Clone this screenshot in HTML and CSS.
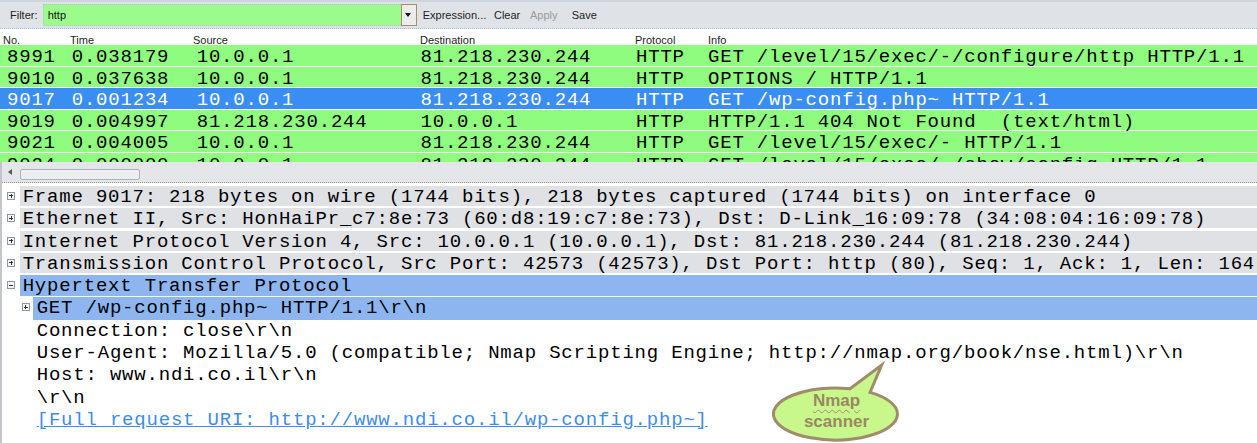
FILE: index.html
```html
<!DOCTYPE html>
<html>
<head>
<meta charset="utf-8">
<link rel="stylesheet" href="styles.css">
</head>
<body>
<div class="app">
  <div class="toolbar">
    <span class="flabel">Filter:</span>
    <div class="filter"><span class="val">http</span><span class="dd"></span></div>
    <span class="tb w-expr">Expression...</span>
    <span class="tb w-clear">Clear</span>
    <span class="tb w-apply dis">Apply</span>
    <span class="tb">Save</span>
  </div>

  <div class="phead">
    <span>No.</span><span>Time</span><span>Source</span><span>Destination</span><span>Protocol</span><span>Info</span>
  </div>
  <div class="prows">
    <div class="prow"><span>8991</span><span>0.038179</span><span>10.0.0.1</span><span>81.218.230.244</span><span>HTTP</span><span>GET /level/15/exec/-/configure/http HTTP/1.1</span></div>
    <div class="prow"><span>9010</span><span>0.037638</span><span>10.0.0.1</span><span>81.218.230.244</span><span>HTTP</span><span>OPTIONS / HTTP/1.1</span></div>
    <div class="prow sel"><span>9017</span><span>0.001234</span><span>10.0.0.1</span><span>81.218.230.244</span><span>HTTP</span><span>GET /wp-config.php~ HTTP/1.1</span></div>
    <div class="prow"><span>9019</span><span>0.004997</span><span>81.218.230.244</span><span>10.0.0.1</span><span>HTTP</span><span>HTTP/1.1 404 Not Found  (text/html)</span></div>
    <div class="prow"><span>9021</span><span>0.004005</span><span>10.0.0.1</span><span>81.218.230.244</span><span>HTTP</span><span>GET /level/15/exec/- HTTP/1.1</span></div>
    <div class="prow"><span>9024</span><span>0.000000</span><span>10.0.0.1</span><span>81.218.230.244</span><span>HTTP</span><span>GET /level/15/exec/-/show/config HTTP/1.1</span></div>
  </div>
  <div class="hscroll"><span class="arr"></span><span class="thumb"></span></div>

  <div class="details">
    <div class="drow"><span class="tog plus"></span><div class="lbl g">Frame 9017: 218 bytes on wire (1744 bits), 218 bytes captured (1744 bits) on interface 0</div></div>
    <div class="drow"><span class="tog plus"></span><div class="lbl g">Ethernet II, Src: HonHaiPr_c7:8e:73 (60:d8:19:c7:8e:73), Dst: D-Link_16:09:78 (34:08:04:16:09:78)</div></div>
    <div class="drow"><span class="tog plus"></span><div class="lbl g">Internet Protocol Version 4, Src: 10.0.0.1 (10.0.0.1), Dst: 81.218.230.244 (81.218.230.244)</div></div>
    <div class="drow"><span class="tog plus"></span><div class="lbl g">Transmission Control Protocol, Src Port: 42573 (42573), Dst Port: http (80), Seq: 1, Ack: 1, Len: 164</div></div>
    <div class="drow"><span class="tog minus"></span><div class="lbl hl http">Hypertext Transfer Protocol</div></div>
    <div class="drow sub"><span class="tog plus"></span><div class="lbl hl get">GET /wp-config.php~ HTTP/1.1\r\n</div></div>
    <div class="drow"><div class="lbl txt">Connection: close\r\n</div></div>
    <div class="drow"><div class="lbl txt">User-Agent: Mozilla/5.0 (compatible; Nmap Scripting Engine; http://nmap.org/book/nse.html)\r\n</div></div>
    <div class="drow"><div class="lbl txt">Host: www.ndi.co.il\r\n</div></div>
    <div class="drow"><div class="lbl txt">\r\n</div></div>
    <div class="drow"><div class="lbl txt"><span class="link">[Full request URI: http://www.ndi.co.il/wp-config.php~]</span></div></div>
  </div>

  <div class="bubble">
    <svg width="135" height="83" viewBox="0 0 135 83">
      <path d="M100,32.4 A62 26 0 1 1 80,28.72 L111.7,5 Z" fill="#c8f78b" stroke="#a08b6b" stroke-width="3" stroke-linejoin="miter"/>
    </svg>
    <div class="btxt"><span class="nm">Nmap</span><br>scanner</div>
  </div>
</div>
</body>
</html>
```

FILE: styles.css
```css
* { box-sizing: border-box; }
body {
  margin: 0;
  width: 1257px;
  height: 443px;
  overflow: hidden;
  background: #fff;
  font-family: "Liberation Sans", Arial, sans-serif;
}
.app { position: relative; height: 443px; }

/* toolbar */
.toolbar {
  height: 29px;
  border-top: 2px solid #cfd5dc;
  border-bottom: 1px dotted #9fc0e6;
  background: #dfe2e6;
  display: flex;
  align-items: center;
  font-size: 11px;
  color: #1e1e1e;
}
.flabel { margin-left: 10px; width: 32.7px; }
.filter {
  width: 374px;
  height: 22px;
  display: flex;
  background: #9bfb8b;
  border: 1px dotted #b5c3d2;
}
.filter .val { flex: 1; padding-left: 4px; line-height: 20px; color: #111; }
.dd {
  position: relative;
  width: 16px;
  height: 22px;
  margin: -1px -1px -1px 0;
  border: 1px solid #a38f6c;
  background: #ececec;
}
.dd::before {
  content: "";
  position: absolute;
  left: 3.5px;
  top: 8px;
  border-left: 3.5px solid transparent;
  border-right: 3.5px solid transparent;
  border-top: 4px solid #111;
}
.tb { display: inline-block; }
.w-expr { margin-left: 6px; width: 71.3px; }
.w-clear { width: 36px; }
.w-apply { width: 41.7px; }
.dis { color: #9a9a9a; }

/* packet list */
.phead {
  height: 16px;
  padding: 5px 0 0 3px;
  font-size: 11px;
  line-height: 12px;
  color: #1e1e1e;
  display: grid;
  grid-template-columns: 67px 123px 227px 215px 73px 1fr;
  background: #fff;
}
.prows { height: 116.7px; overflow: hidden; }
.prow {
  display: grid;
  grid-template-columns: 64.7px 125px 223.8px 215.5px 72px 1fr;
  padding-left: 7px;
  height: 21.6px;
  border-bottom: 1px solid #fff;
  background: #8ffc7f;
  font-family: "Liberation Mono", "DejaVu Sans Mono", monospace;
  font-size: 19px;
  letter-spacing: 0.8px;
  line-height: 25px;
  white-space: pre;
  color: #000;
}
.prow.sel { background: #3a8df2; color: #fff; }

.hscroll {
  height: 21px;
  background: #e4e6e9;
  border-left: 2px solid #c2c6cc;
  border-bottom: 1px dotted #a08c70;
  display: flex;
  align-items: center;
}
.arr {
  margin-left: 6px;
  border-top: 3.5px solid transparent;
  border-bottom: 3.5px solid transparent;
  border-right: 4px solid #555;
}
.thumb {
  margin-left: 8px;
  width: 120px;
  height: 11px;
  margin-top: 6px;
  border: 1px solid #aab2bc;
  border-radius: 2px;
  background: #eceef1;
}

/* details */
.details {
  height: 260.3px;
  padding-top: 3.3px;
  border-left: 2px solid #c2c6cc;
}
.drow { display: flex; height: 22.3px; }
.tog {
  flex: none;
  position: relative;
  width: 8px;
  height: 8px;
  margin: 6px 4.7px 0 5.3px;
  border: 1px solid #8f99a3;
  background: #f3f4f5;
}
.tog::before {
  content: "";
  position: absolute;
  left: 1px;
  top: 2.5px;
  width: 4px;
  height: 1px;
  background: #333;
}
.tog.plus::after {
  content: "";
  position: absolute;
  left: 2.5px;
  top: 1px;
  width: 1px;
  height: 4px;
  background: #333;
}
.drow.sub .tog { margin-left: 19.7px; margin-right: 3.6px; }
.lbl {
  flex: 1;
  height: 20px;
  padding-left: 2.7px;
  font-family: "Liberation Mono", "DejaVu Sans Mono", monospace;
  font-size: 19px;
  letter-spacing: 0.8px;
  line-height: 23.4px;
  white-space: pre;
  color: #000;
}
.lbl.g { background: #dfe1e5; }
.lbl.hl { background: #8db6f1; }
.lbl.http { height: 21.3px; }
.lbl.get { height: 22.3px; padding-left: 3.4px; }
.lbl.txt { padding-left: 34.7px; }
.link { color: #3b8ded; text-decoration: underline; }

/* callout */
.bubble {
  position: absolute;
  left: 770px;
  top: 360px;
  width: 135px;
  height: 83px;
}
.bubble svg { position: absolute; left: 0; top: 0; }
.btxt {
  position: absolute;
  left: 0;
  top: 30px;
  width: 133px;
  text-align: center;
  font-family: "Liberation Sans", Arial, sans-serif;
  font-weight: bold;
  font-size: 17px;
  line-height: 21px;
  color: #9c8763;
}
.nm {
  text-decoration: underline wavy #b08a7a;
  text-decoration-thickness: 1px;
  text-underline-offset: 3px;
}
```
